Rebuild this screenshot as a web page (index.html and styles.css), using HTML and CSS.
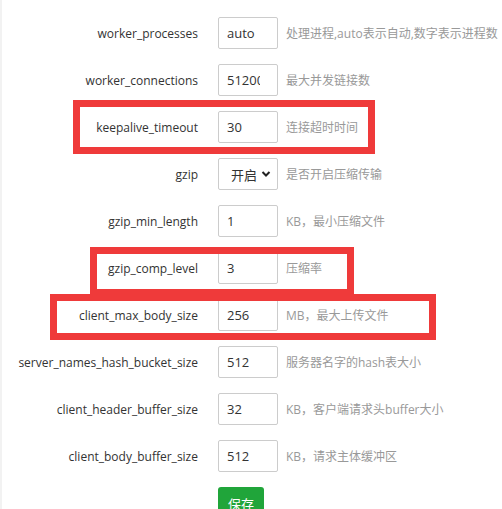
FILE: index.html
```html
<!DOCTYPE html>
<html lang="zh-CN">
<head>
<meta charset="utf-8">
<link rel="stylesheet" href="styles.css">
</head>
<body>
<div class="page">
  <form class="conf">
    <div class="row"><label class="name">worker_processes</label><input class="val" value="auto"><span class="desc">处理进程,auto表示自动,数字表示进程数</span></div>
    <div class="row"><label class="name">worker_connections</label><input class="val" value="51200"><span class="desc">最大并发链接数</span></div>
    <div class="row"><label class="name">keepalive_timeout</label><input class="val" value="30"><span class="desc">连接超时时间</span></div>
    <div class="row"><label class="name">gzip</label><div class="val sel"><span>开启</span><svg class="chev" viewBox="0 0 10 8" width="10" height="8"><path d="M1.5 2 L5 5.5 L8.5 2" fill="none" stroke="#222" stroke-width="2"/></svg></div><span class="desc">是否开启压缩传输</span></div>
    <div class="row"><label class="name">gzip_min_length</label><input class="val" value="1"><span class="desc">KB，最小压缩文件</span></div>
    <div class="row"><label class="name">gzip_comp_level</label><input class="val" value="3"><span class="desc">压缩率</span></div>
    <div class="row"><label class="name">client_max_body_size</label><input class="val" value="256"><span class="desc">MB，最大上传文件</span></div>
    <div class="row"><label class="name">server_names_hash_bucket_size</label><input class="val" value="512"><span class="desc">服务器名字的hash表大小</span></div>
    <div class="row"><label class="name">client_header_buffer_size</label><input class="val" value="32"><span class="desc">KB，客户端请求头buffer大小</span></div>
    <div class="row"><label class="name">client_body_buffer_size</label><input class="val" value="512"><span class="desc">KB，请求主体缓冲区</span></div>
    <div class="row btnrow"><span class="name"></span><button type="button" class="save">保存</button></div>
  </form>
  <div class="mark m1"></div>
  <div class="mark m2"></div>
  <div class="mark m3"></div>
</div>
</body>
</html>
```
FILE: styles.css
```css
html, body {
  margin: 0;
  padding: 0;
  background: #fff;
}
.page {
  position: relative;
  width: 502px;
  height: 509px;
  overflow: hidden;
  border-left: 2px solid #f2f2f2;
  box-sizing: border-box;
  font-family: "Open Sans", "Noto Sans CJK SC", sans-serif;
  font-size: 12px;
  color: #333;
}
.conf {
  display: flex;
  flex-direction: column;
  gap: 15px;
  padding-top: 17px;
}
.row {
  display: flex;
  align-items: center;
  height: 32px;
}
.btnrow {
  align-items: flex-start;
}
.name {
  width: 196px;
  text-align: right;
  margin-right: 20px;
  flex: none;
  font-size: 12px;
  color: #333;
}
.val {
  width: 60px;
  height: 32px;
  box-sizing: border-box;
  border: 1px solid #ccc;
  border-radius: 2px;
  padding: 0 17px 0 8px;
  font-family: "Open Sans", "Noto Sans CJK SC", sans-serif;
  font-size: 13px;
  color: #333;
  background: #fff;
  flex: none;
  outline: none;
}
.sel {
  display: flex;
  align-items: center;
  justify-content: space-between;
  padding: 0 6px 0 12px;
  font-family: "Noto Sans CJK SC", sans-serif;
}
.chev {
  display: block;
}
.desc {
  margin-left: 8px;
  color: #999;
  font-size: 12px;
  font-family: "Open Sans", "Noto Sans CJK SC", sans-serif;
  white-space: nowrap;
}
.save {
  height: 32px;
  width: 46px;
  border: none;
  border-radius: 3px;
  background: #20a53a;
  color: #fff;
  font-family: "Noto Sans CJK SC", sans-serif;
  font-size: 13px;
  padding: 0;
}
.mark {
  position: absolute;
  border: 7px solid #ef3a3a;
  box-sizing: border-box;
}
.m1 { left: 71px; top: 100px; width: 302px; height: 54px; }
.m2 { left: 88px; top: 247px; width: 264px; height: 49px; }
.m3 { left: 48px; top: 294px; width: 386px; height: 46px; }
```
